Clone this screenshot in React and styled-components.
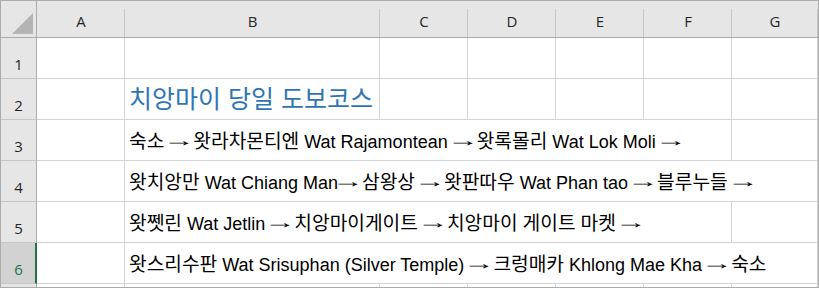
import styled, { createGlobalStyle } from 'styled-components'

const GlobalStyle = createGlobalStyle`
  html, body {
    margin: 0;
    padding: 0;
    background: #ffffff;
  }
`

const COLS = ['A', 'B', 'C', 'D', 'E', 'F', 'G']

const Sheet = styled.div`
  width: 819px;
  height: 288px;
  box-sizing: border-box;
  border: 1px solid #ababab;
  overflow: hidden;
  display: grid;
  grid-template-columns: 36px 88px 255px 88px 88px 88px 88px 86px;
  grid-auto-rows: 41px;
  grid-template-rows: 37px;
  background: #ffffff;
`

const Corner = styled.div`
  box-sizing: border-box;
  background: #e6e6e6;
  border-right: 1px solid #ababab;
  border-bottom: 1px solid #ababab;
  display: flex;
  align-items: flex-end;
  justify-content: flex-end;
  padding: 0 3px 3px 0;
`

const ColHead = styled.div`
  box-sizing: border-box;
  background: linear-gradient(#c6c6c6, #c6c6c6) right bottom / 1px 28px no-repeat, #e6e6e6;
  border-bottom: 1px solid #ababab;
  display: flex;
  align-items: flex-end;
  justify-content: center;
  padding-bottom: 7px;
  font-family: "Open Sans", "Noto Sans", sans-serif;
  font-size: 15px;
  line-height: 18px;
  color: #262626;
`

const RowHead = styled.div`
  box-sizing: border-box;
  background: ${p => (p.$selected ? '#d2d2d2' : '#e6e6e6')};
  border-right: ${p => (p.$selected ? '2px solid #217346' : '1px solid #ababab')};
  border-bottom: 1px solid #c6c6c6;
  display: flex;
  align-items: flex-end;
  justify-content: center;
  padding-bottom: 5px;
  padding-left: ${p => (p.$selected ? '1px' : '0')};
  font-family: "Open Sans", "Noto Sans", sans-serif;
  font-size: 15px;
  line-height: 18px;
  color: ${p => (p.$selected ? '#217346' : '#262626')};
`

const Cell = styled.div`
  box-sizing: border-box;
  grid-column: span ${p => p.$span || 1};
  border-right: 1px solid #d4d4d4;
  border-bottom: 1px solid #d4d4d4;
  display: flex;
  align-items: flex-end;
  padding: 0 0 ${p => (p.$title ? '5px' : '8px')} 4px;
  white-space: nowrap;
  overflow: visible;
  font-family: "Liberation Sans", "Noto Sans CJK KR", sans-serif;
  font-size: ${p => (p.$title ? '25px' : '18px')};
  line-height: ${p => (p.$title ? '29px' : '20px')};
  color: ${p => (p.$title ? '#2e75b6' : '#000000')};
`

const Hangul = styled.span`
  font-family: "Noto Sans CJK KR", sans-serif;
  font-size: 19.2px;
  line-height: 20px;
`

const Arrow = styled.span`
  display: inline-block;
  width: 19px;
  text-align: center;
  font-family: "Liberation Sans", sans-serif;
  transform: translateY(-2px) scaleX(1.75);
`

const rows = [
  { n: 1, cells: [] },
  { n: 2, cells: [{ text: '치앙마이 당일 도보코스', title: true, span: 1 }] },
  { n: 3, cells: [{ text: '숙소 → 왓라차몬티엔 Wat Rajamontean → 왓록몰리 Wat Lok Moli →', span: 5 }] },
  { n: 4, cells: [{ text: '왓치앙만 Wat Chiang Man→ 삼왕상 → 왓판따우 Wat Phan tao → 블루누들 →', span: 6 }] },
  { n: 5, cells: [{ text: '왓쩻린 Wat Jetlin → 치앙마이게이트 → 치앙마이 게이트 마켓 →', span: 5 }] },
  { n: 6, cells: [{ text: '왓스리수판 Wat Srisuphan (Silver Temple) → 크렁매카 Khlong Mae Kha → 숙소', span: 6 }], selected: true },
  { n: '', cells: [] },
]

// split a line into hangul runs, arrows and the rest (latin + spaces)
function renderLine(text) {
  return text.split(/([\uAC00-\uD7A3]+|→)/).filter(Boolean).map((part, i) => {
    if (part === '→') return <Arrow key={i}>→</Arrow>
    if (/[\uAC00-\uD7A3]/.test(part)) return <Hangul key={i}>{part}</Hangul>
    return <span key={i}>{part}</span>
  })
}

function DataRow({ row }) {
  const used = row.cells.reduce((s, c) => s + c.span, 0)
  const rest = 6 - used
  return (
    <>
      <RowHead $selected={row.selected}>{row.n}</RowHead>
      <Cell />
      {row.cells.map((c, i) => (
        <Cell key={i} $span={c.span} $title={c.title}>
          <span>{c.title ? c.text : renderLine(c.text)}</span>
        </Cell>
      ))}
      {Array.from({ length: rest }).map((_, i) => (
        <Cell key={'e' + i} />
      ))}
    </>
  )
}

export default function App() {
  return (
    <>
      <GlobalStyle />
      <Sheet>
        <Corner>
          <svg width="21" height="21" viewBox="0 0 21 21">
            <polygon points="21,0 21,21 0,21" fill="#b4b4b4" />
          </svg>
        </Corner>
        {COLS.map(c => (
          <ColHead key={c}>{c}</ColHead>
        ))}
        {rows.map((r, i) => (
          <DataRow key={i} row={r} />
        ))}
      </Sheet>
    </>
  )
}
